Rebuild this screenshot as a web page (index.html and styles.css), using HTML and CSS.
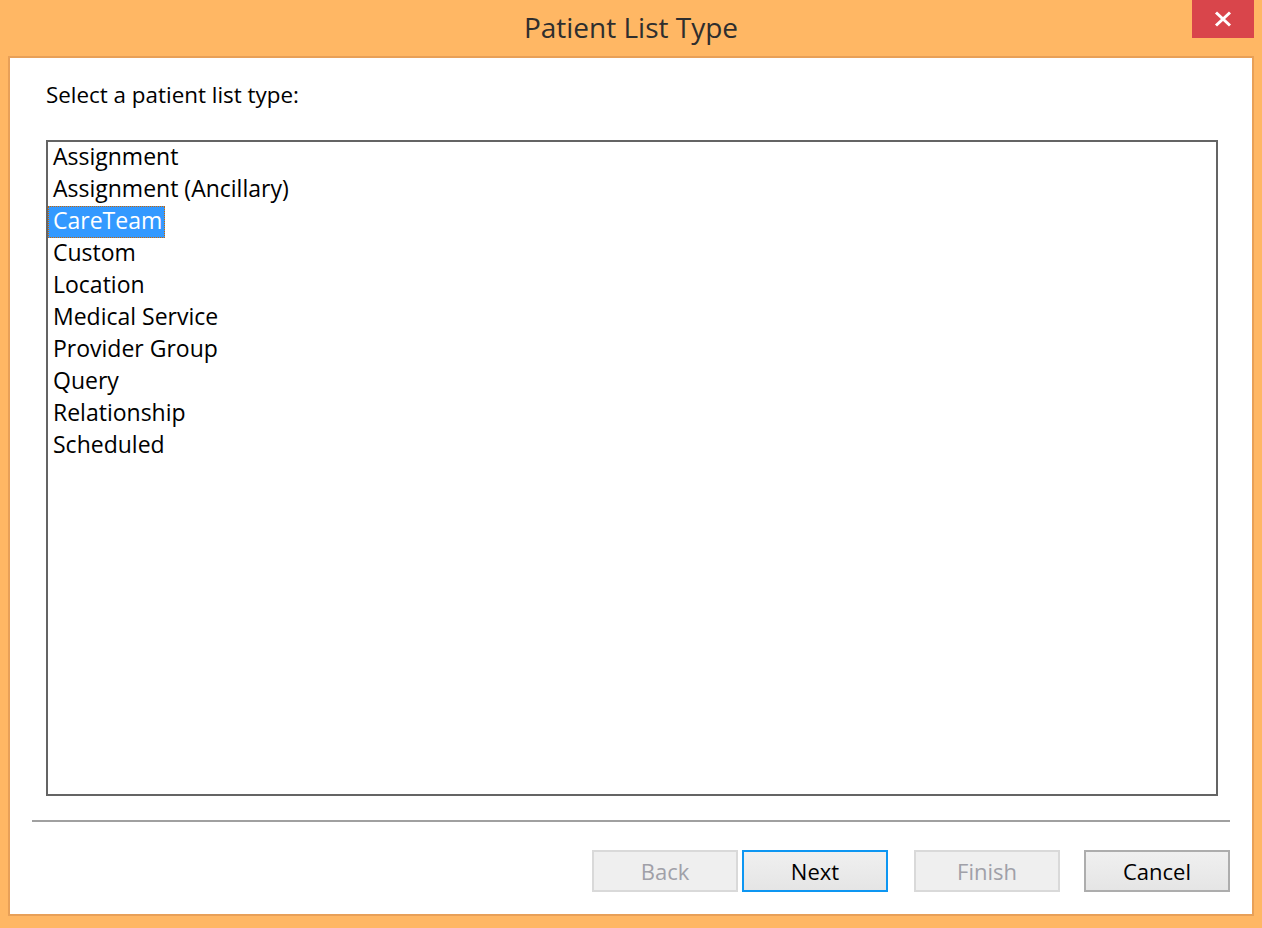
FILE: index.html
```html
<!DOCTYPE html>
<html lang="en">
<head>
<meta charset="utf-8">
<title>Patient List Type</title>
<link rel="stylesheet" href="styles.css">
</head>
<body>
<div class="window">
  <header class="titlebar">
    <h1 class="title">Patient List Type</h1>
    <button class="close" aria-label="Close">
      <svg width="18" height="16" viewBox="0 0 18 16" aria-hidden="true">
        <path d="M2 1.5 L16 14.5 M16 1.5 L2 14.5" stroke="#ffffff" stroke-width="3" fill="none"/>
      </svg>
    </button>
  </header>
  <main class="dialog">
    <p class="prompt">Select a patient list type:</p>
    <ul class="listbox">
      <li class="item"><span class="label">Assignment</span></li>
      <li class="item"><span class="label">Assignment (Ancillary)</span></li>
      <li class="item"><span class="label selected">CareTeam</span></li>
      <li class="item"><span class="label">Custom</span></li>
      <li class="item"><span class="label">Location</span></li>
      <li class="item"><span class="label">Medical Service</span></li>
      <li class="item"><span class="label">Provider Group</span></li>
      <li class="item"><span class="label">Query</span></li>
      <li class="item"><span class="label">Relationship</span></li>
      <li class="item"><span class="label">Scheduled</span></li>
    </ul>
    <hr class="separator">
    <div class="buttons">
      <div class="nav-group">
        <button class="btn btn-disabled">Back</button>
        <button class="btn btn-default">Next</button>
      </div>
      <button class="btn btn-disabled">Finish</button>
      <button class="btn btn-normal">Cancel</button>
    </div>
  </main>
</div>
</body>
</html>
```

FILE: styles.css
```css
html, body {
  margin: 0;
  padding: 0;
}

body {
  width: 1262px;
  height: 928px;
  background: #ffb764;
  font-family: "Open Sans", "Noto Sans", sans-serif;
  overflow: hidden;
}

.window {
  display: flex;
  flex-direction: column;
  height: 928px;
}

.titlebar {
  position: relative;
  height: 56px;
  display: flex;
  justify-content: center;
  align-items: flex-start;
}

.title {
  margin: 0;
  padding-top: 8px;
  font-size: 28px;
  font-weight: 400;
  line-height: 38px;
  color: #2e2e2e;
}

.close {
  position: absolute;
  top: 0;
  right: 8px;
  width: 62px;
  height: 38px;
  border: 0;
  padding: 0;
  background: #d9454b;
  display: flex;
  align-items: center;
  justify-content: center;
}

.dialog {
  margin: 0 8px;
  height: 856px;
  border: 2px solid #e8a058;
  background: #ffffff;
  display: flex;
  flex-direction: column;
}

.prompt {
  margin: 0;
  padding: 22px 0 0 36px;
  font-size: 22.4px;
  line-height: 30px;
  color: #000000;
}

.listbox {
  list-style: none;
  margin: 30px 34px 0 36px;
  padding: 0;
  height: 652px;
  border: 2px solid #646464;
  box-sizing: content-box;
}

.item {
  display: flex;
  height: 32px;
  font-size: 23px;
  color: #000000;
  white-space: nowrap;
}

.label {
  height: 32px;
  box-sizing: border-box;
  padding: 0 3px 3px 5px;
  line-height: 29px;
}

.selected {
  background: #3399ff;
  color: #ffffff;
  outline: 1px dotted #cc6600;
  outline-offset: -1px;
}

.separator {
  margin: 24px 22px 0 22px;
  height: 2px;
  border: 0;
  background: #a0a0a0;
}

.buttons {
  display: flex;
  justify-content: flex-end;
  gap: 24px;
  margin: 28px 22px 0 22px;
}

.nav-group {
  display: flex;
  gap: 4px;
  margin-right: 2px;
}

.btn {
  width: 146px;
  height: 42px;
  padding: 0;
  box-sizing: border-box;
  font-family: "Open Sans", "Noto Sans", sans-serif;
  font-size: 22px;
  line-height: 1;
  border-width: 2px;
  border-style: solid;
  display: flex;
  align-items: center;
  justify-content: center;
}

.btn-disabled {
  border-color: #d9d9d9;
  background: #efefef;
  color: #a0a0a8;
}

.btn-default {
  border-color: #0d96f2;
  background: linear-gradient(#f0f0f0, #e5e5e5);
  color: #000000;
}

.btn-normal {
  border-color: #adadad;
  background: linear-gradient(#f0f0f0, #e5e5e5);
  color: #000000;
}
```
